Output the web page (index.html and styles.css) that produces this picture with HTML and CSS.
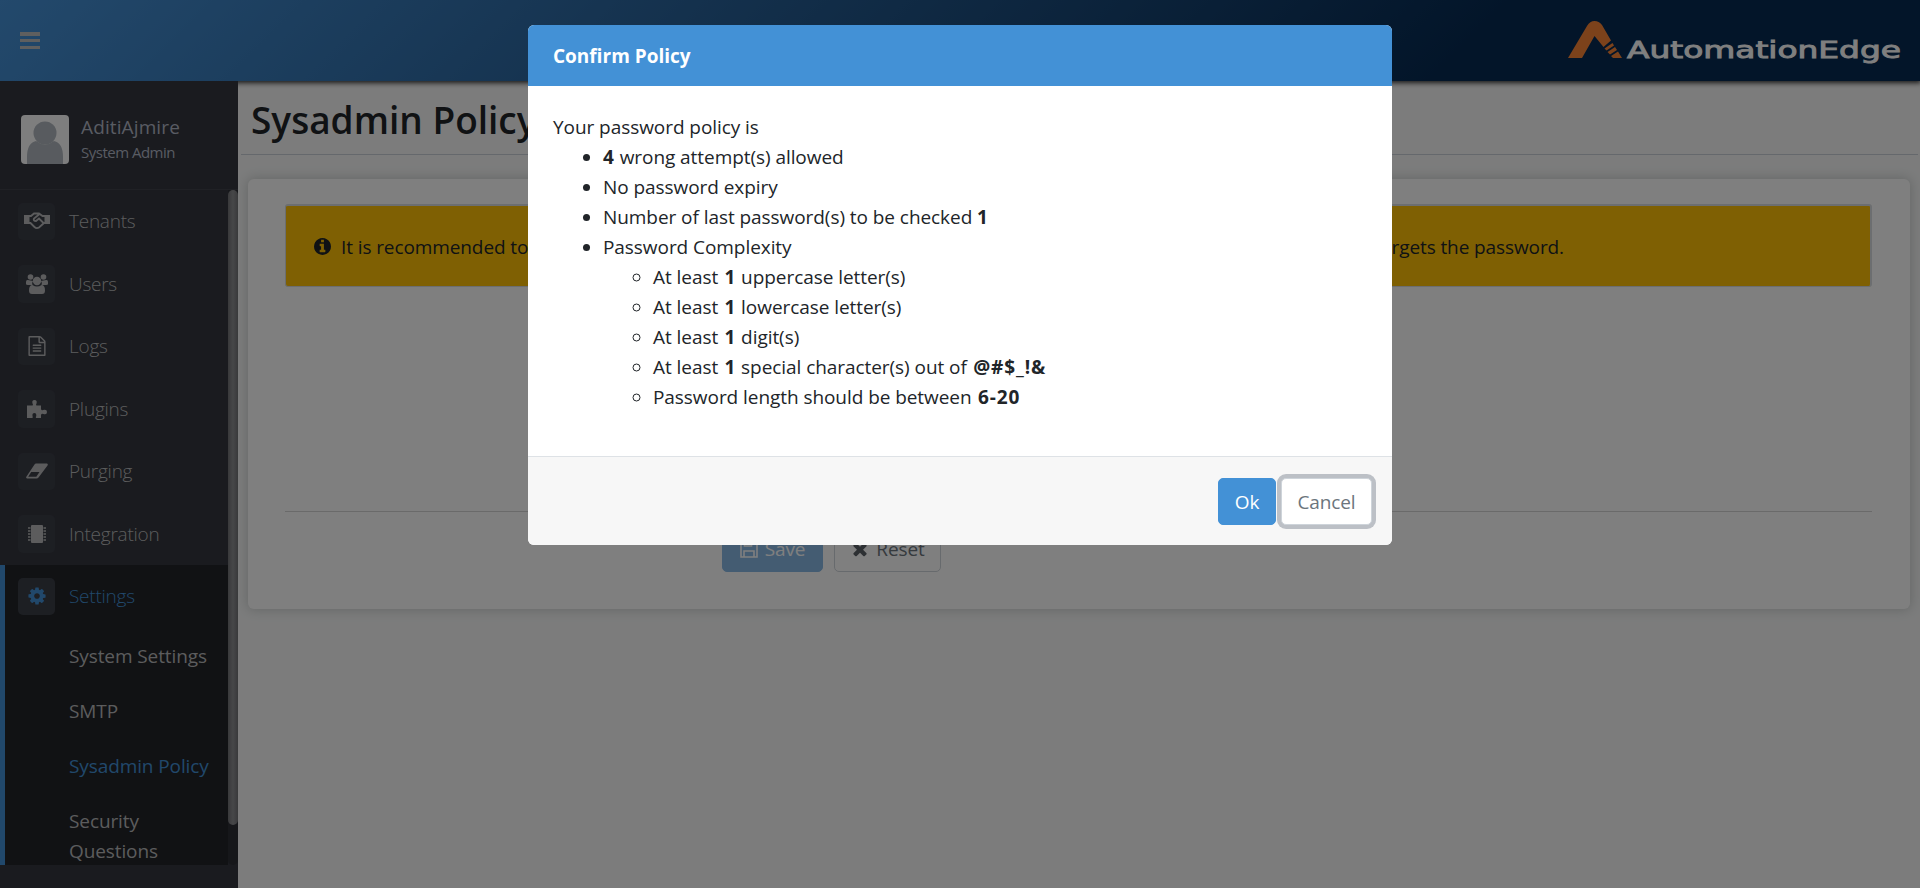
FILE: index.html
```html
<!DOCTYPE html>
<html lang="en">
<head>
<meta charset="utf-8">
<title>Sysadmin Policy</title>
<link rel="stylesheet" href="styles.css">
</head>
<body>
<div class="app">
  <header class="topbar">
    <svg class="burger" viewBox="0 0 20 17"><path d="M0 0h20v4H0zM0 7h20v3H0zM0 14h20v3H0z"/></svg>
    <svg class="logo" viewBox="0 0 336 50" width="336" height="50">
      <path fill="#f98536" d="M1 41 20 9Q23 4 27.500 4Q32 4 35 8L44 23.500 36.500 30 27.500 19 15 41z"/>
      <path fill="#f98536" d="M37.500 31.500 45.500 26 47 28.500 39.500 33.500zM40.500 35 48 30 50 33 43 37.500zM44 39 51 34.500 55 41H46z"/>
      <text x="60" y="41" textLength="274" lengthAdjust="spacingAndGlyphs">AutomationEdge</text>
    </svg>
  </header>
  <div class="columns">
    <aside class="sidebar">
      <div class="profile">
        <svg class="avatar" viewBox="0 0 48 49"><rect width="48" height="49" rx="4" fill="#fcfcfc"/><circle cx="24" cy="18" r="11.500" fill="#b0b7be"/><path fill="#b0b7be" d="M6 49V42Q6 28 15 26Q24 33 33 26Q42 28 42 42V49z"/></svg>
        <div class="who"><div class="name">AditiAjmire</div><div class="role">System Admin</div></div>
      </div>
      <div class="navwrap">
        <nav class="nav">
          <a class="item"><span class="ico"><svg width="26" height="18" viewBox="0 0 26 18"><path d="M0 3h5.500v9H0zM20.500 3H26v9h-5.500z"/><path fill="none" stroke="currentColor" stroke-width="1.800" d="M5 4h2l3-2.500h5L18.500 4H21M5 11h1.500l4 4Q12.500 17 15 15.500L20 11h1M15 2.500 10 6.500Q9 9 12 9L15 6.500 19.500 11"/></svg></span><span>Tenants</span></a>
          <a class="item"><span class="ico"><svg width="22" height="20" viewBox="0 0 22 20"><circle cx="4.500" cy="3" r="2.800"/><circle cx="17.500" cy="3" r="2.800"/><path d="M0 10V8Q0 5.500 2 6L7 7Q5.500 9 6.500 11H2Q0 11 0 10zM22 10V8Q22 5.500 20 6L15 7Q16.500 9 15.500 11H20Q22 11 22 10z"/><circle cx="11" cy="7" r="4.200"/><path d="M3 16.500Q3 11 6.500 11Q11 14 15.500 11Q19 11 19 16.500Q19 20 16 20H6Q3 20 3 16.500z"/></svg></span><span>Users</span></a>
          <a class="item"><span class="ico"><svg width="20" height="20" viewBox="0 0 1792 1792"><path d="M1596 380q28 28 48 76t20 88v1152q0 40-28 68t-68 28h-1344q-40 0-68-28t-28-68v-1600q0-40 28-68t68-28h896q40 0 88 20t76 48zm-444-244v376h376q-10-29-22-41l-313-313q-12-12-41-22zm384 1528v-1024h-416q-40 0-68-28t-28-68v-416h-768v1536h1280zm-1024-864q0-14 9-23t23-9h704q14 0 23 9t9 23v64q0 14-9 23t-23 9h-704q-14 0-23-9t-9-23v-64zm736 224q14 0 23 9t9 23v64q0 14-9 23t-23 9h-704q-14 0-23-9t-9-23v-64q0-14 9-23t23-9h704zm0 256q14 0 23 9t9 23v64q0 14-9 23t-23 9h-704q-14 0-23-9t-9-23v-64q0-14 9-23t23-9h704z"/></svg></span><span>Logs</span></a>
          <a class="item"><span class="ico"><svg width="20" height="18" viewBox="0 0 20 18"><path d="M0 5.500H5.500Q6.500 5 5.500 3.500Q4.500 0 7.500 0Q10.500 0 9.500 3.500Q8.500 5 9.500 5.500H14V9Q14.500 11 16 10Q20 9 20 12Q20 15 16.500 14Q14.500 13 14 15V18H9Q8.500 17 9.300 16Q9.500 13 7.500 13Q5 13 5.500 16Q6.500 18 5 18H0z"/></svg></span><span>Plugins</span></a>
          <a class="item"><span class="ico"><svg width="22" height="16" viewBox="0 0 22 16"><path fill-rule="evenodd" d="M10 .5H21Q22.300 1 21.500 2.500L12.500 14.500Q11.800 15.500 10.500 15.500H1Q-.5 15 .5 13.500L8.500 1.500Q9.200.5 10 .5zM5.200 9 2.200 13.700H10.300L13.500 9z"/></svg></span><span>Purging</span></a>
          <a class="item"><span class="ico"><svg width="18" height="20" viewBox="0 0 18 20"><rect x="3" y="1" width="12" height="18" rx="1"/><path stroke="currentColor" stroke-width="1.500" d="M0 4H2.500M0 7H2.500M0 10H2.500M0 13H2.500M0 16H2.500M15.500 4H18M15.500 7H18M15.500 10H18M15.500 13H18M15.500 16H18"/></svg></span><span>Integration</span></a>
          <div class="group">
            <a class="item on"><span class="ico"><svg width="20" height="20" viewBox="0 0 1792 1792"><path d="M1152 896q0-106-75-181t-181-75-181 75-75 181 75 181 181 75 181-75 75-181zm512-109v222q0 12-8 23t-20 13l-185 28q-19 54-39 91 35 50 107 138 10 12 10 25t-9 23q-27 37-99 108t-94 71q-12 0-26-9l-138-108q-44 23-91 38-16 136-29 186-7 28-36 28h-222q-14 0-24.500-8.500t-11.500-21.500l-28-184q-49-16-90-37l-141 107q-10 9-25 9-14 0-25-11-126-114-165-168-7-10-7-23 0-12 8-23 15-21 51-66.500t54-70.500q-27-50-41-99l-183-27q-13-2-21-12.500t-8-23.500v-222q0-12 8-23t19-13l186-28q14-46 39-92-40-57-107-138-10-12-10-24 0-10 9-23 26-36 98.500-107.500t94.500-71.500q13 0 26 10l138 107q44-23 91-38 16-136 29-186 7-28 36-28h222q14 0 24.500 8.500t11.500 21.500l28 184q49 16 90 37l142-107q9-9 24-9 13 0 25 10 129 119 165 170 7 8 7 22 0 12-8 23-15 21-51 66.500t-54 70.500q26 50 41 98l183 28q13 2 21 12.500t8 23.500z"/></svg></span><span>Settings</span></a>
            <a class="sub">System Settings</a>
            <a class="sub">SMTP</a>
            <a class="sub cur">Sysadmin Policy</a>
            <a class="sub">Security<br>Questions</a>
          </div>
        </nav>
        <div class="track"><div class="thumb"></div></div>
      </div>
    </aside>
    <main class="main">
      <div class="titlebar"><h1>Sysadmin Policy</h1></div>
      <section class="card">
        <div class="alert">
          <svg class="info" viewBox="128 128 1536 1536"><path d="M1152 1376v-160q0-14-9-23t-23-9h-96v-512q0-14-9-23t-23-9h-320q-14 0-23 9t-9 23v160q0 14 9 23t23 9h96v320h-96q-14 0-23 9t-9 23v160q0 14 9 23t23 9h448q14 0 23-9t9-23zm-128-896v-160q0-14-9-23t-23-9h-192q-14 0-23 9t-9 23v160q0 14 9 23t23 9h192q14 0 23-9t9-23zm640 416q0 209-103 385.500t-279.500 279.500-385.500 103-385.500-103-279.500-279.500-103-385.500 103-385.500 279.500-279.500 385.500-103 385.500 103 279.500 279.500 103 385.500z"/></svg>
          <p><span>It is recommended to</span><span>forgets the password.</span></p>
        </div>
        <div class="actions">
          <button class="save"><svg width="18" height="18" viewBox="0 0 18 18"><path fill="none" stroke="currentColor" stroke-width="1.600" d="M1 1h12l4 4v12H1zM4.500 1v5h7V1M4 17v-6h10v6"/></svg>Save</button>
          <button class="reset"><svg width="20" height="20" viewBox="0 0 1792 1792"><path d="M1490 1322q0 40-28 68l-136 136q-28 28-68 28t-68-28l-294-294-294 294q-28 28-68 28t-68-28l-136-136q-28-28-28-68t28-68l294-294-294-294q-28-28-28-68t28-68l136-136q28-28 68-28t68 28l294 294 294-294q28-28 68-28t68 28l136 136q28 28 28 68t-28 68l-294 294 294 294q28 28 28 68z"/></svg>Reset</button>
        </div>
      </section>
    </main>
  </div>
</div>
<div class="backdrop">
  <div class="modal">
    <div class="mhead">Confirm Policy</div>
    <div class="mbody">
      <div>Your password policy is</div>
      <ul>
        <li><b>4</b> wrong attempt(s) allowed</li>
        <li>No password expiry</li>
        <li>Number of last password(s) to be checked <b>1</b></li>
        <li>Password Complexity
          <ul>
            <li>At least <b>1</b> uppercase letter(s)</li>
            <li>At least <b>1</b> lowercase letter(s)</li>
            <li>At least <b>1</b> digit(s)</li>
            <li>At least <b>1</b> special character(s) out of <b>@#$_!&amp;</b></li>
            <li>Password length should be between <b>6-20</b></li>
          </ul>
        </li>
      </ul>
    </div>
    <div class="mfoot"><button class="ok">Ok</button><button class="cancel">Cancel</button></div>
  </div>
</div>
</body>
</html>
```
FILE: styles.css
```css
* { box-sizing: border-box; }
body { margin: 0; width: 1920px; height: 888px; overflow: hidden; position: relative; font: 19px/30px "Open Sans", "Noto Sans", sans-serif; letter-spacing: -0.1px; color: #212529; }
button { font: inherit; letter-spacing: inherit; }
svg { fill: currentColor; flex: none; }
.app { height: 888px; display: flex; flex-direction: column; }
.topbar { position: relative; z-index: 1; height: 81px; flex: none; display: flex; justify-content: space-between; align-items: flex-start; padding: 0 17px 0 20px; background: linear-gradient(135deg, #4692d8 0%, #062a52 76%); box-shadow: 0 1px 5px 1px rgba(0,0,0,.8); }
.burger { width: 20px; height: 17px; margin-top: 32px; color: #bfbfbf; }
.logo { margin-top: 16.500px; }
.logo text { font: 23.500px "DejaVu Sans", sans-serif; letter-spacing: 0; fill: #fff; stroke: #fff; stroke-width: .9; }
.columns { flex: 1; min-height: 0; display: flex; }
.sidebar { position: relative; z-index: 2; width: 238px; flex: none; background: #34363e; display: flex; flex-direction: column; padding-bottom: 23px; }
.profile { height: 109px; flex: none; padding: 34px 0 0 21px; display: flex; gap: 12px; border-bottom: 1px solid #40434a; }
.avatar { width: 48px; height: 49px; }
.who { margin-top: -1px; }
.name { color: #b3b8c6; line-height: 26px; letter-spacing: .12px; }
.role { color: #b3b8c6; font-size: 15px; line-height: 25px; letter-spacing: -.5px; }
.navwrap { flex: 1; min-height: 0; display: flex; }
.nav { flex: 1; overflow: hidden; font-weight: 300; color: #b8b9bb; }
.item { display: flex; align-items: center; height: 62.500px; padding-left: 18px; gap: 14px; letter-spacing: -.25px; }
.ico { width: 37px; height: 37.500px; border-radius: 5px; background: #3b3e47; display: grid; place-items: center; }
.group { background: #222428; border-left: 5px solid #4391d6; height: 310px; }
.group .item { padding-left: 13px; color: #4391d6; }
.sub { display: block; padding: 13px 0 12px 64px; font-weight: 400; }
.cur { color: #4391d6; }
.track { width: 10px; background: #2c2e35; border-radius: 0 0 5px 5px; }
.thumb { height: 635px; border-radius: 5px; background: linear-gradient(90deg, #727376, #8e8f92, #727376); }
.main { flex: 1; background: #f8f9f9; padding: 0 2px 0 3px; }
.titlebar { height: 74px; border-bottom: 1px solid #cbd1d9; padding-left: 10px; background: #f9f9f9; }
h1 { margin: 0; padding-top: 14px; font-size: 37px; line-height: 50px; font-weight: 600; letter-spacing: 0; }
.card { margin: 24px 8.500px 0 7px; height: 430px; background: #fff; border-radius: 6px; padding: 25px 37.500px 0 37px; box-shadow: 0 0 12px 1px rgba(50,65,60,.22); }
.alert { height: 83px; background: #ffc107; border: 1px solid #d8dde0; border-width: 2px 2px 1px 1px; border-radius: 3px; display: flex; align-items: center; padding-left: 28px; gap: 10px; }
.info { width: 17px; height: 17px; }
.alert p { margin: 1px 0 0; width: 1223px; display: flex; justify-content: space-between; white-space: nowrap; }
.actions { margin-top: 224px; border-top: 1px solid #d5d5d5; padding: 12.500px 0 0 437px; display: flex; gap: 11px; }
.actions button, .mfoot button { height: 47px; border-radius: 5px; border: 1px solid #ced4da; display: flex; align-items: center; justify-content: center; padding: 0; background: #fff; color: #6c757d; }
.actions button { padding-top: 2px; }
.actions .save { width: 101px; background: #89b9e5; border-color: #89b9e5; color: #fff; gap: 7px; }
.actions .reset { width: 107px; gap: 6px; }
.actions .reset svg { color: #5b6066; }
.backdrop { position: absolute; z-index: 3; inset: 0; background: rgba(0,0,0,.5); }
.modal { margin: 25px auto 0; width: 864px; height: 520px; background: #fff; border-radius: 6px; overflow: hidden; display: flex; flex-direction: column; }
.mhead { height: 61px; background: #4391d6; color: #fff; font-weight: 700; padding: 16px 25px; letter-spacing: 0; }
.mbody { flex: 1; padding: 26px 25px 0; letter-spacing: -.06px; }
.mbody b { letter-spacing: .9px; margin-left: 1.5px; }
.mbody b:first-child:not(ul ul b) { margin-left: 0; }
ul { margin: 0; padding-left: 50px; }
.mfoot { height: 89px; border-top: 1px solid #dee2e6; background: #f7f7f7; display: flex; justify-content: flex-end; gap: 5px; padding: 21px 20px 0 0; }
.mfoot .ok { width: 58px; background: #4391d6; border-color: #4391d6; color: #fff; }
.mfoot .cancel { width: 91px; box-shadow: 0 0 0 4px #bcc0c6; }
```
